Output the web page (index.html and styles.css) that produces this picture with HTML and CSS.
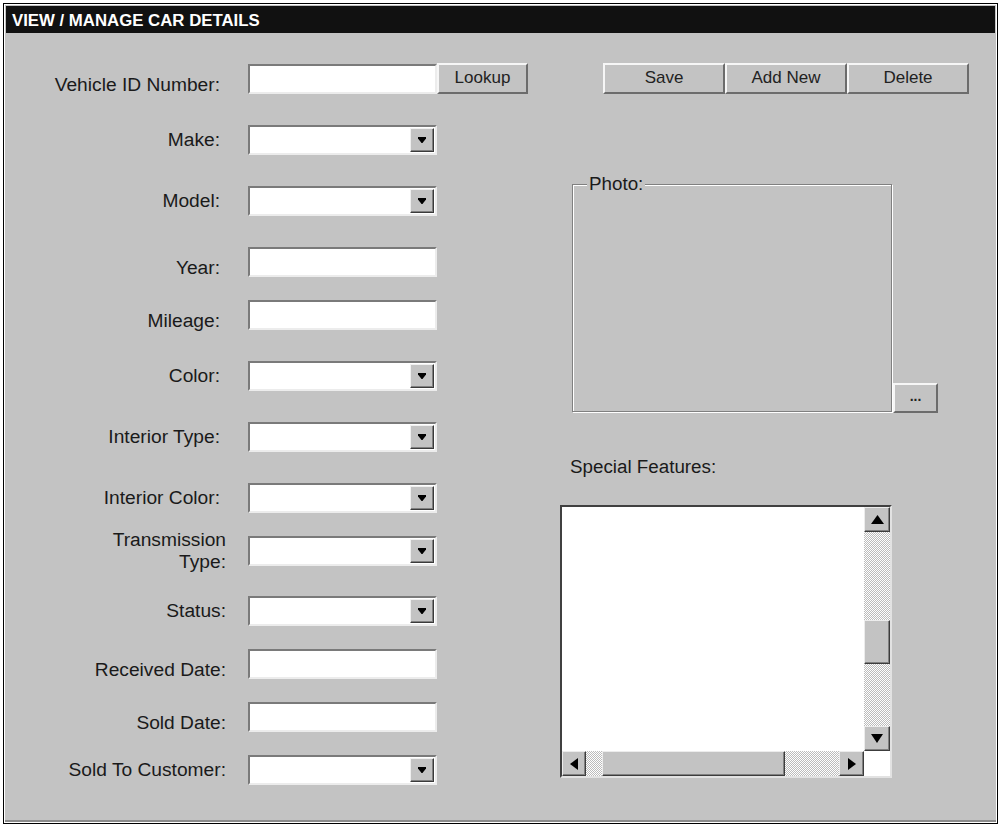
FILE: index.html
```html
<!DOCTYPE html>
<html>
<head>
<meta charset="utf-8">
<title>View / Manage Car Details</title>
<link rel="stylesheet" href="styles.css">
</head>
<body>
<div class="window">
  <div class="panel">
    <div class="title">VIEW / MANAGE CAR DETAILS</div>
    <div class="content">
      <div class="form">
        <div class="row text"><label class="label">Vehicle ID Number:</label><input class="field" type="text"><button class="btn lookup">Lookup</button></div>
        <div class="row"><label class="label">Make:</label><div class="combo"><span class="drop"><svg width="8" height="6" viewBox="0 0 8 6"><path d="M0 0H8V1.5L4.5 6H3.5L0 1.5Z" fill="#000"/></svg></span></div></div>
        <div class="row"><label class="label">Model:</label><div class="combo"><span class="drop"><svg width="8" height="6" viewBox="0 0 8 6"><path d="M0 0H8V1.5L4.5 6H3.5L0 1.5Z" fill="#000"/></svg></span></div></div>
        <div class="row text"><label class="label">Year:</label><input class="field" type="text"></div>
        <div class="row text"><label class="label">Mileage:</label><input class="field" type="text"></div>
        <div class="row"><label class="label">Color:</label><div class="combo"><span class="drop"><svg width="8" height="6" viewBox="0 0 8 6"><path d="M0 0H8V1.5L4.5 6H3.5L0 1.5Z" fill="#000"/></svg></span></div></div>
        <div class="row"><label class="label">Interior Type:</label><div class="combo"><span class="drop"><svg width="8" height="6" viewBox="0 0 8 6"><path d="M0 0H8V1.5L4.5 6H3.5L0 1.5Z" fill="#000"/></svg></span></div></div>
        <div class="row"><label class="label">Interior Color:</label><div class="combo"><span class="drop"><svg width="8" height="6" viewBox="0 0 8 6"><path d="M0 0H8V1.5L4.5 6H3.5L0 1.5Z" fill="#000"/></svg></span></div></div>
        <div class="row wide"><label class="label two">Transmission<br>Type:</label><div class="combo"><span class="drop"><svg width="8" height="6" viewBox="0 0 8 6"><path d="M0 0H8V1.5L4.5 6H3.5L0 1.5Z" fill="#000"/></svg></span></div></div>
        <div class="row wide"><label class="label">Status:</label><div class="combo"><span class="drop"><svg width="8" height="6" viewBox="0 0 8 6"><path d="M0 0H8V1.5L4.5 6H3.5L0 1.5Z" fill="#000"/></svg></span></div></div>
        <div class="row wide text"><label class="label">Received Date:</label><input class="field" type="text"></div>
        <div class="row wide text"><label class="label">Sold Date:</label><input class="field" type="text"></div>
        <div class="row wide"><label class="label">Sold To Customer:</label><div class="combo"><span class="drop"><svg width="8" height="6" viewBox="0 0 8 6"><path d="M0 0H8V1.5L4.5 6H3.5L0 1.5Z" fill="#000"/></svg></span></div></div>
      </div>
      <div class="side">
        <div class="actions">
          <button class="btn action">Save</button><button class="btn action">Add New</button><button class="btn action">Delete</button>
        </div>
        <div class="photo-row">
          <fieldset class="photo"><legend>Photo:</legend><div class="photo-area"></div></fieldset>
          <button class="btn browse">...</button>
        </div>
        <div class="features-label">Special Features:</div>
        <div class="memo">
          <div class="memo-text"></div>
          <div class="vscroll">
            <span class="sbtn"><svg width="13" height="9" viewBox="0 0 13 9"><path d="M6.5 0L13 9H0Z" fill="#000"/></svg></span>
            <span class="track top"></span>
            <span class="thumb vthumb"></span>
            <span class="track fill"></span>
            <span class="sbtn"><svg width="12" height="9" viewBox="0 0 12 9"><path d="M0 0H12L6 9Z" fill="#000"/></svg></span>
          </div>
          <div class="hscroll">
            <span class="sbtn hbtn-l"><svg width="8" height="12" viewBox="0 0 8 12"><path d="M0 6L8 0V12Z" fill="#000"/></svg></span>
            <span class="track left"></span>
            <span class="thumb hthumb"></span>
            <span class="track fill"></span>
            <span class="sbtn hbtn-r"><svg width="8" height="12" viewBox="0 0 8 12"><path d="M8 6L0 0V12Z" fill="#000"/></svg></span>
          </div>
          <div class="corner"></div>
        </div>
      </div>
    </div>
  </div>
</div>
</body>
</html>
```

FILE: styles.css
```css
* { box-sizing: border-box; }

body {
  margin: 0;
  background: #fff;
  font-family: "Liberation Sans", Arial, sans-serif;
  color: #1a1a1a;
}

.window {
  margin: 3px 0 0 3px;
  width: 995px;
  height: 821px;
  border: 1px solid #000;
  padding: 1px;
  background: #fff;
}

.panel {
  height: 100%;
  background: #c3c3c3;
  padding: 1px;
  border-bottom: 2px solid #8c8c8c;
}

.title {
  height: 27px;
  background: #111;
  color: #fff;
  font-weight: bold;
  font-size: 16.8px;
  line-height: 25px;
  padding: 2px 0 0 6px;
  white-space: nowrap;
}

.content {
  display: flex;
}

/* ---------- left form ---------- */
.form {
  width: 554px;
  padding-top: 31px;
  display: grid;
  grid-template-rows: 61px 61px 61px 53px 61px 61px 61px 53px 60px 53px 53px 53px 30px;
}

.row {
  display: flex;
  align-items: flex-start;
}

.label {
  width: 220px;
  height: 30px;
  margin-right: 22px;
  padding-right: 6px;
  display: flex;
  align-items: center;
  justify-content: flex-end;
  text-align: right;
  font-size: 19.2px;
  line-height: 22px;
  white-space: nowrap;
}

.row.wide .label { padding-right: 0; }
.row.text .label { padding-top: 12px; }

.field,
.combo {
  width: 189px;
  height: 30px;
  margin: 0;
  background: #fff;
  border: 2px solid;
  border-color: #7a7a7a #ececec #ececec #7a7a7a;
  outline: none;
  font: inherit;
}

.combo {
  display: flex;
  justify-content: flex-end;
  align-items: flex-start;
  padding: 1px 1px 0 0;
}

.drop {
  width: 24px;
  height: 24px;
  background: #c3c3c3;
  border: 1px solid;
  border-color: #f0f0f0 #3a3a3a #3a3a3a #f0f0f0;
  box-shadow: inset -1px -1px 0 #808080;
  display: flex;
  align-items: center;
  justify-content: center;
  padding-bottom: 1px;
}

.drop svg { display: block; }

/* ---------- buttons ---------- */
.btn {
  margin: 0;
  padding: 0;
  background: #c3c3c3;
  border: 2px solid;
  border-color: #f6f6f6 #6c6c6c #6c6c6c #f6f6f6;
  font-family: "Liberation Sans", Arial, sans-serif;
  font-size: 17px;
  color: #222;
  line-height: 1;
}

.lookup {
  width: 91px;
  height: 31px;
  margin-top: -1px;
  padding-bottom: 2px;
}

/* ---------- right side ---------- */
.side {
  padding-top: 30px;
  width: 420px;
}

.actions {
  display: flex;
  margin-left: 43px;
}

.action {
  width: 122px;
  height: 31px;
  padding-bottom: 2px;
}

.photo-row {
  display: flex;
  align-items: flex-end;
  margin-top: 80px;
}

.photo {
  margin: 0 0 0 12px;
  padding: 0;
  width: 320px;
  border: 1px solid #808080;
  box-shadow: 1px 1px 0 #fff, inset 1px 1px 0 #fff;
  min-inline-size: 0;
}

.photo legend {
  margin-left: 14px;
  padding: 0 2px;
  font-size: 18.8px;
  line-height: 20px;
  background: #c3c3c3;
}

.photo-area {
  height: 217px;
}

.browse {
  width: 45px;
  height: 30px;
  margin: 0 0 -1px 1px;
  font-size: 14px;
  font-weight: bold;
  padding-bottom: 4px;
}

.features-label {
  margin: 44px 0 0 10px;
  font-size: 18.8px;
  line-height: 21px;
}

.memo {
  margin-top: 28px;
  width: 332px;
  height: 273px;
  border: 2px solid;
  border-color: #404040 #e2e2e2 #e2e2e2 #404040;
  background: #fff;
  display: grid;
  grid-template-columns: 1fr 26px;
  grid-template-rows: 1fr 25px;
}

.vscroll {
  display: flex;
  flex-direction: column;
}

.hscroll {
  display: flex;
}

.sbtn,
.thumb {
  background: #c3c3c3;
  border: 1px solid;
  border-color: #ececec #3c3c3c #3c3c3c #ececec;
  box-shadow: inset -1px -1px 0 #808080;
}

.sbtn {
  flex: 0 0 25px;
  display: flex;
  align-items: center;
  justify-content: center;
}

.sbtn svg { display: block; }

.hbtn-l { flex-basis: 24px; }

.track {
  background-color: #fff;
  background-image: repeating-conic-gradient(#bcbcbc 0 25%, #fff 0 50%);
  background-size: 2px 2px;
}

.track.top { flex: 0 0 88px; }
.track.left { flex: 0 0 16px; }
.track.fill { flex: 1; }

.vthumb { flex: 0 0 44px; }
.hthumb { flex: 0 0 183px; }

.corner {
  background: #fff;
}
```
